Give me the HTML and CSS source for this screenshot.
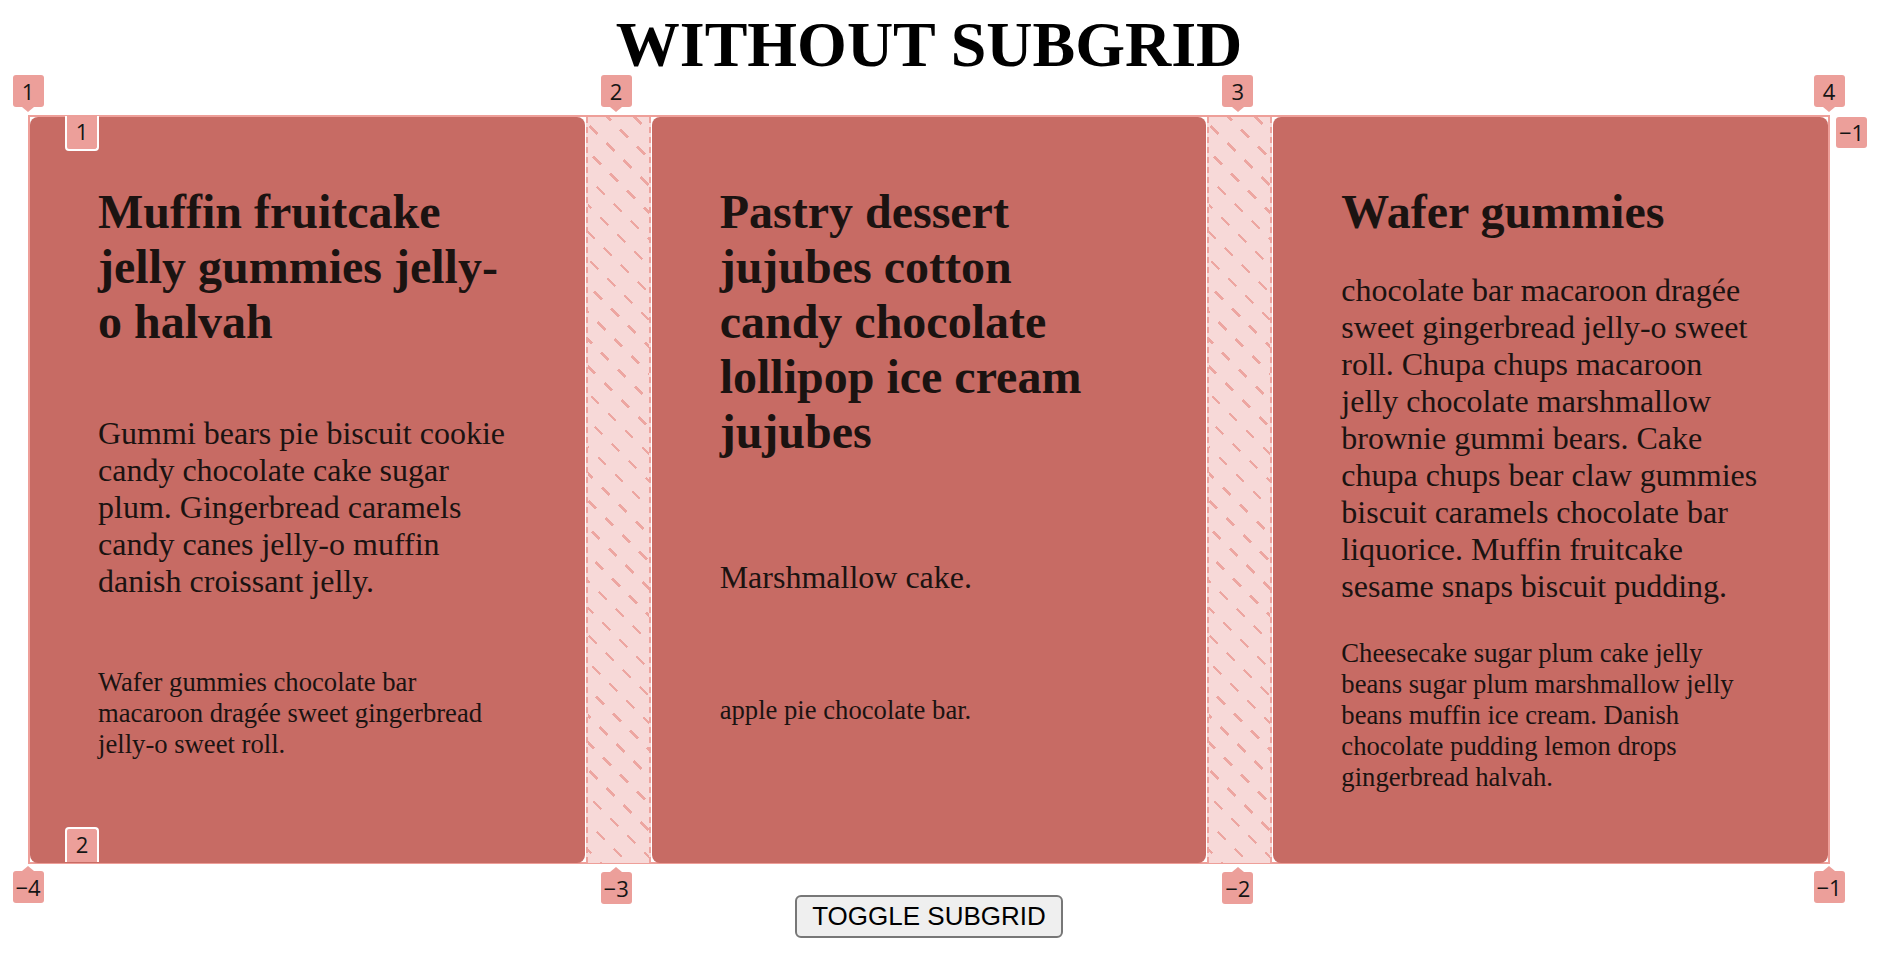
FILE: index.html
```html
<!DOCTYPE html>
<html lang="en">
<head>
    <meta charset="utf-8">
    <title>Without subgrid</title>
    <link rel="stylesheet" href="styles.css">
</head>
<body>
<div class="page">
    <h1>WITHOUT SUBGRID</h1>

    <div class="grid">
        <article class="card">
            <h2>Muffin fruitcake jelly gummies jelly-o halvah</h2>
            <p>Gummi bears pie biscuit cookie candy chocolate cake sugar plum. Gingerbread caramels candy canes jelly-o muffin danish croissant jelly.</p>
            <p class="note">Wafer gummies chocolate bar macaroon dragée sweet gingerbread jelly-o sweet roll.</p>
        </article>
        <div class="gutter">
            <span class="line-num top">2</span>
            <span class="line-num bottom">&minus;3</span>
        </div>
        <article class="card">
            <h2>Pastry dessert jujubes cotton candy chocolate lollipop ice cream jujubes</h2>
            <p>Marshmallow cake.</p>
            <p class="note">apple pie chocolate bar.</p>
        </article>
        <div class="gutter">
            <span class="line-num top">3</span>
            <span class="line-num bottom">&minus;2</span>
        </div>
        <article class="card">
            <h2>Wafer gummies</h2>
            <p>chocolate bar macaroon dragée sweet gingerbread jelly-o sweet roll. Chupa chups macaroon jelly chocolate marshmallow brownie gummi bears. Cake chupa chups bear claw gummies biscuit caramels chocolate bar liquorice. Muffin fruitcake sesame snaps biscuit pudding.</p>
            <p class="note">Cheesecake sugar plum cake jelly beans sugar plum marshmallow jelly beans muffin ice cream. Danish chocolate pudding lemon drops gingerbread halvah.</p>
        </article>

        <!-- grid inspector labels -->
        <span class="line-num top start">1</span>
        <span class="line-num top end">4</span>
        <span class="line-num bottom start">&minus;4</span>
        <span class="line-num bottom end">&minus;1</span>
        <span class="line-num side">&minus;1</span>
        <span class="line-num row first">1</span>
        <span class="line-num row last">2</span>
    </div>

    <button class="toggle" type="button">TOGGLE SUBGRID</button>
</div>
</body>
</html>
```

FILE: styles.css
```css
html,body{
    margin: 0;
    padding: 0;
    background: #fff;
}

.page{
    width: 1802px;
    margin-left: 28px;
    font-family: "Liberation Serif", "Times New Roman", serif;
    color: #1b1311;
}

h1{
    margin: 15px 0 40px 0;
    font-size: 64px;
    line-height: 60px;
    font-weight: bold;
    text-align: center;
    color: #000;
}

.grid{
    position: relative;
    display: grid;
    grid-template-columns: 1fr 67px 1fr 67px 1fr;
    height: 745px;
    border: 2px solid #ee9f99;
    background: #fff;
}

.card{
    display: grid;
    row-gap: 33px;
    padding: 67px 68px 70px 68px;
    background: #c76b64;
    border-radius: 8px;
}
.card h2{
    margin: 0;
    font-size: 48px;
    font-weight: bold;
    line-height: normal;
}
.card p{
    margin: 0;
    font-size: 32px;
    line-height: normal;
}
.card p.note{
    font-size: 26.67px;
}

.gutter{
    position: relative;
    margin: 0 1px;
    border-left: 2px dashed #eea39e;
    border-right: 2px dashed #eea39e;
    background: #f7d9d8;
}
.gutter::before{
    content: "";
    position: absolute;
    inset: 0;
    background: repeating-linear-gradient(45deg, transparent 0 8px, #eda6a1 8px 10.5px, transparent 10.5px 19px);
    -webkit-mask-image: repeating-linear-gradient(-45deg, #000 0 11px, transparent 11px 24px);
    mask-image: repeating-linear-gradient(-45deg, #000 0 11px, transparent 11px 24px);
}

/* line number badges */
.line-num{
    position: absolute;
    z-index: 2;
    width: 31px;
    height: 32px;
    background: #ec9f9a;
    color: #151515;
    font-family: "Open Sans", "DejaVu Sans", sans-serif;
    font-size: 22px;
    line-height: 32px;
    text-align: center;
    border-radius: 3px;
}
.line-num::after{
    content: "";
    position: absolute;
    left: 50%;
    margin-left: -6px;
    border-left: 6px solid transparent;
    border-right: 6px solid transparent;
}
.line-num.top{
    top: -42px;
    left: 50%;
    margin-left: -15.5px;
}
.line-num.top::after{
    bottom: -5px;
    border-top: 5px solid #ec9f9a;
}
.line-num.bottom{
    top: calc(100% + 9px);
    left: 50%;
    margin-left: -15.5px;
}
.line-num.bottom::after{
    top: -5px;
    border-bottom: 5px solid #ec9f9a;
}
.gutter .line-num.top,
.gutter .line-num.bottom{
    left: calc(50% - 2px);
}
.line-num.start{
    left: -17.5px;
    margin-left: 0;
}
.line-num.end{
    left: auto;
    right: -16.5px;
    margin-left: 0;
}
.line-num.side{
    top: 0;
    left: calc(100% + 8px);
    height: 31px;
    line-height: 31px;
}
.line-num.side::after{
    display: none;
}
.line-num.row{
    left: 35px;
    width: 30px;
    height: 30px;
    line-height: 30px;
    border: 2px solid #fff;
    border-radius: 4px;
}
.line-num.row::after{
    display: none;
}
.line-num.first{
    top: -1px;
    border-top: none;
    border-radius: 0 0 4px 4px;
    height: 33px;
}
.line-num.last{
    bottom: 0;
    border-bottom: none;
    border-radius: 4px 4px 0 0;
    height: 33px;
}

.toggle{
    display: block;
    margin: 31px auto 0 auto;
    padding: 4px 15px;
    font-family: "Liberation Sans", Arial, sans-serif;
    font-size: 26px;
    color: #000;
    background: #efefef;
    border: 2px solid #777;
    border-radius: 6px;
}
```
